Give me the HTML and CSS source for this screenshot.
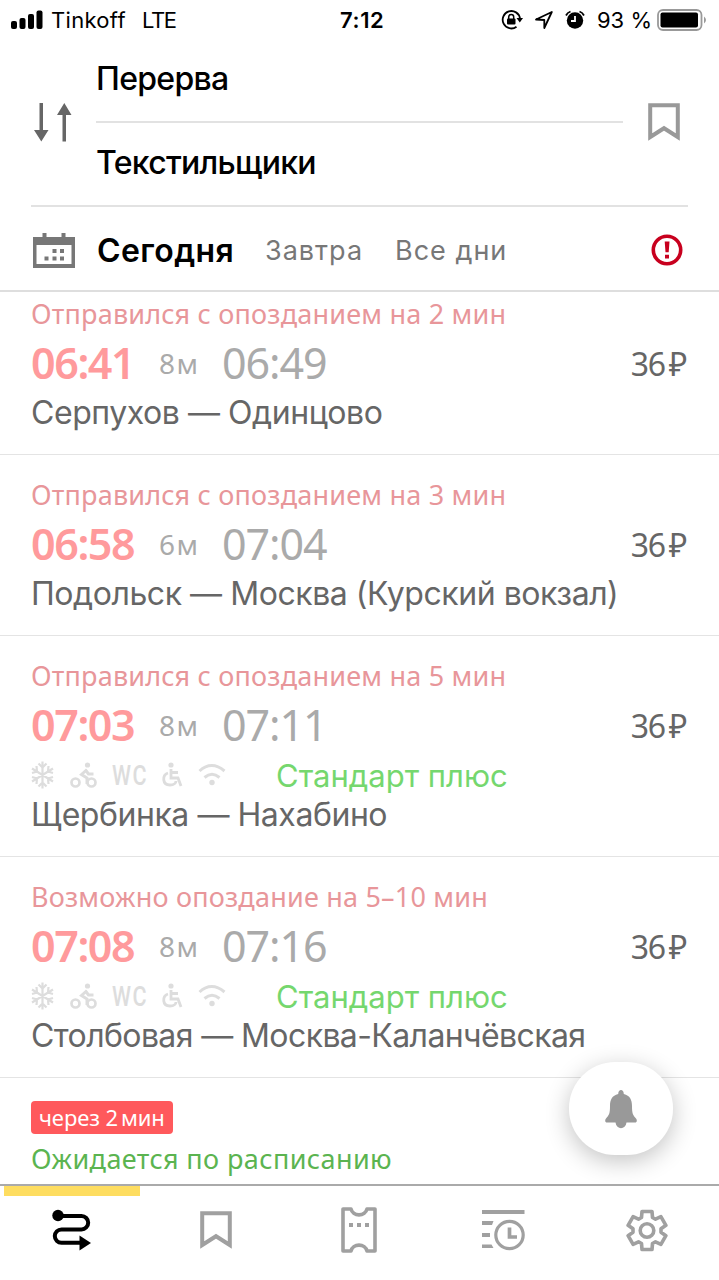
FILE: index.html
```html
<!DOCTYPE html>
<html lang="ru">
<head>
  <meta charset="UTF-8" />
  <meta name="viewport" content="width=device-width, initial-scale=1" />
  <title>Расписание электричек</title>
  <link rel="stylesheet" href="styles.css">
</head>
<body>
  <!-- icons used more than once -->
  <svg class="sprite">
    <symbol id="bookmark" viewBox="0 0 32 38">
      <path d="M2.2 2.2h27.6v31.8L16 25.2 2.2 34z" fill="none" stroke="currentColor" stroke-width="4" />
    </symbol>
    <symbol id="amenities" viewBox="0 0 200 32">
      <g fill="none" stroke="currentColor" stroke-width="2.7">
        <path d="M11.500 2.500v27M1 9.500l21 13M1 22.500l21-13M7.500 4.500l4 4 4-4M7.500 27.500l4-4 4 4M1 14l5-1.500-.5-5.500M22 14l-5-1.500.5-5.500M1 18l5 1.500-.5 5.500M22 18l-5 1.500.5 5.500" stroke-width="2.200" />
        <circle cx="44.500" cy="23.500" r="4" />
        <circle cx="60.500" cy="23.500" r="4" />
        <path d="M56 10.500l-5.500 5 5.500 3.500v6M54.500 11l3 4h5" stroke-width="3" />
        <path d="M140 10v9h7l3 8M141 13.500h6M137 14c-6 2-6 12 2 12 4 0 6-2 6-4" stroke-width="2.800" />
        <path d="M168.500 12q12-11 25 0M173.500 18.500q7.500-6.500 15 0" stroke-width="3" />
      </g>
      <g fill="currentColor">
        <circle cx="56.500" cy="6" r="2.600" />
        <circle cx="140" cy="6" r="2.600" />
        <circle cx="181" cy="23.500" r="2.700" />
      </g>
    </symbol>
  </svg>

  <div class="status">
    <svg class="signal" width="32" height="20" viewBox="0 0 32 20">
      <rect x="0" y="11" width="6" height="8" rx="2" />
      <rect x="8.500" y="8" width="6" height="11" rx="2" />
      <rect x="17" y="4" width="6" height="15" rx="2" />
      <rect x="25.500" y="0.500" width="6" height="18.500" rx="2" />
    </svg>
    <span class="carrier">Tinkoff</span>
    <span class="network">LTE</span>
    <span class="clock">7:12</span>
    <div class="status-right">
      <svg width="22" height="20" viewBox="0 0 22 20">
        <path d="M15.500 16.800a8.700 8.700 0 1 1 3.500-8.300" fill="none" stroke="#000" stroke-width="1.800" />
        <path d="M15.500 8h6.500l-3.200 4.500z" />
        <rect x="6" y="8.500" width="8.500" height="6" rx="1" />
        <path d="M7.700 9V7a2.500 2.500 0 0 1 5 0v2" fill="none" stroke="#000" stroke-width="1.500" />
      </svg>
      <svg width="18" height="20" viewBox="0 0 18 20">
        <path d="M1 9.500L16.800 2 9.300 18V10z" fill="none" stroke="#000" stroke-width="1.800" stroke-linejoin="round" />
      </svg>
      <svg width="20" height="20" viewBox="0 0 20 20">
        <circle cx="10" cy="10.500" r="8.200" />
        <path d="M1 5.500a8 8 0 0 1 4.500-4M19 5.500a8 8 0 0 0-4.500-4" fill="none" stroke="#000" stroke-width="1.800" />
        <path d="M10 6v5H6" fill="none" stroke="#fff" stroke-width="1.800" />
      </svg>
      <span class="charge">93 %</span>
      <svg width="51" height="22" viewBox="0 0 51 22">
        <rect x="1" y="1" width="43.500" height="20" rx="5" fill="#fff" stroke="#999" stroke-width="1.800" />
        <rect x="3.500" y="3.500" width="37.500" height="15" rx="2" />
        <path d="M47 7.500q4 3.500 0 7z" fill="#999" />
      </svg>
    </div>
  </div>

  <div class="route">
    <svg class="swap" width="38" height="39" viewBox="0 0 38 39">
      <path d="M5.500 0H9v27h5.500L7.300 38.500 0 27h5.500zM28.500 38.500H32V12h5.500L30.300 0 23 12h5.500z" />
    </svg>
    <div class="stations">
      <div class="station from">Перерва</div>
      <div class="station to">Текстильщики</div>
    </div>
    <svg class="save" width="32" height="38"><use href="#bookmark" /></svg>
  </div>

  <div class="days">
    <svg class="calendar" width="42" height="36" viewBox="0 0 42 36">
      <path d="M9.500 0h4v4H28.500V0h4v4H42v31H0V4h9.500zM3.500 12v19h35V12z" fill-rule="evenodd" />
      <path d="M19.500 16h4v4h-4zM27 16h4v4h-4zM11.500 23.500h4v4h-4zM19.500 23.500h4v4h-4zM27 23.500h4v4h-4z" />
    </svg>
    <span class="day active">Сегодня</span>
    <span class="day tomorrow">Завтра</span>
    <span class="day all">Все дни</span>
    <svg class="alert" width="32" height="32" viewBox="0 0 32 32">
      <circle cx="16" cy="16" r="13.700" fill="none" stroke="#c8001e" stroke-width="3.600" />
      <path d="M13.700 7.500h4.800l-.8 10.800h-3.200zM14 20.800h4v3.600h-4z" fill="#c8001e" />
    </svg>
  </div>

  <div class="trains">
    <div class="train first">
      <div class="delay">Отправился с опозданием на 2 мин</div>
      <div class="times">
        <span class="start">06:41</span>
        <span class="duration">8м</span>
        <span class="end">06:49</span>
        <span class="price">36<span class="rub">₽</span></span>
      </div>
      <div class="direction">Серпухов — Одинцово</div>
    </div>

    <div class="train">
      <div class="delay">Отправился с опозданием на 3 мин</div>
      <div class="times">
        <span class="start">06:58</span>
        <span class="duration">6м</span>
        <span class="end">07:04</span>
        <span class="price">36<span class="rub">₽</span></span>
      </div>
      <div class="direction">Подольск — Москва (Курский вокзал)</div>
    </div>

    <div class="train express">
      <div class="delay">Отправился с опозданием на 5 мин</div>
      <div class="times">
        <span class="start">07:03</span>
        <span class="duration">8м</span>
        <span class="end">07:11</span>
        <span class="price">36<span class="rub">₽</span></span>
      </div>
      <div class="extras">
        <div class="amenities">
          <svg width="200" height="32"><use href="#amenities" /></svg>
          <span class="wc">WC</span>
        </div>
        <span class="class-name">Стандарт плюс</span>
      </div>
      <div class="direction">Щербинка — Нахабино</div>
    </div>

    <div class="train express">
      <div class="delay">Возможно опоздание на 5–10 мин</div>
      <div class="times">
        <span class="start">07:08</span>
        <span class="duration">8м</span>
        <span class="end">07:16</span>
        <span class="price">36<span class="rub">₽</span></span>
      </div>
      <div class="extras">
        <div class="amenities">
          <svg width="200" height="32"><use href="#amenities" /></svg>
          <span class="wc">WC</span>
        </div>
        <span class="class-name">Стандарт плюс</span>
      </div>
      <div class="direction long">Столбовая — Москва-Каланчёвская</div>
    </div>

    <div class="train next">
      <div class="soon">через 2<span class="unit">мин</span></div>
      <div class="on-time">Ожидается по расписанию</div>
    </div>

    <div class="bell">
      <svg width="34" height="40" viewBox="0 0 34 40">
        <path d="M17 1c1.500 0 2.600 1 2.800 4C26 6.500 28 11 28 17c0 8 1 9 4 12.500 1.500 2 .8 4-1 4h-8.500c-1 7.500-10 7.500-11 0H3c-1.800 0-2.500-2-1-4C5 26 6 25 6 17 6 11 8 6.500 14.200 5 14.400 2 15.500 1 17 1z" />
      </svg>
    </div>
  </div>

  <div class="tabs">
    <div class="tab current">
      <svg width="40" height="42" viewBox="0 0 40 42">
        <g fill="none" stroke="#000" stroke-width="4">
          <path d="M6 7h23.500a6.700 6.700 0 0 1 0 13.400H9.500a6.700 6.700 0 0 0 0 13.400H29" />
        </g>
        <circle cx="6" cy="6.500" r="5.700" />
        <path d="M27.500 26.500v15L39 34z" />
      </svg>
    </div>
    <div class="tab">
      <svg width="32" height="38"><use href="#bookmark" /></svg>
    </div>
    <div class="tab">
      <svg width="36" height="46" viewBox="0 0 36 46">
        <path d="M2 2h8a8.200 7.500 0 0 0 16 0h8v42h-8a8.200 7.500 0 0 0-16 0H2z" fill="none" stroke="currentColor" stroke-width="3.600" stroke-linejoin="round" />
        <path d="M8 16h4v4H8zM16 16h4v4h-4zM24 16h4v4h-4z" fill="currentColor" />
      </svg>
    </div>
    <div class="tab">
      <svg width="43" height="42" viewBox="0 0 43 42">
        <path d="M0 1h42.500v4H0zM0 12h11.500L10 16H0zM0 24h8v4H0zM0 35.500h9.500l2 3.500H0z" fill="currentColor" />
        <circle cx="27.500" cy="26" r="13.700" fill="none" stroke="currentColor" stroke-width="3.200" />
        <path d="M27.500 18.500v9.500h7.500" fill="none" stroke="currentColor" stroke-width="3.700" />
      </svg>
    </div>
    <div class="tab">
      <svg width="42" height="43" viewBox="-21 -21.500 42 43">
        <g fill="none" stroke="currentColor" stroke-width="3.600" stroke-linejoin="round">
          <path d="M-5.500-13L-5-19H5l.5 6 3 1.700 5.400-2.500 5 8.600-4.900 3.500v3.400l4.900 3.500-5 8.600-5.400-2.500-3 1.700L5 19H-5l-.5-6-3-1.700-5.400 2.500-5-8.600 4.900-3.500v-3.400l-4.900-3.500 5-8.600 5.400 2.500z" />
          <circle cx="0" cy="0" r="6.800" />
        </g>
      </svg>
    </div>
  </div>
</body>
</html>
```
FILE: styles.css
```css
* {
  box-sizing: border-box;
}

body {
  margin: 0;
  height: 1280px;
  overflow: hidden;
  display: flex;
  flex-direction: column;
  background: #fff;
  color: #000;
  font-family: Inter, "Liberation Sans", sans-serif;
  white-space: nowrap;
}

svg {
  display: block;
  flex: none;
}

.sprite {
  position: absolute;
  width: 0;
  height: 0;
}

.status {
  display: grid;
  grid-template-columns: 32px 92px 196px 1fr auto;
  align-items: center;
  height: 40px;
  padding: 0 11px;
  font-size: 22px;
}

.carrier {
  padding-left: 8px;
  letter-spacing: 0.3px;
}

.network {
  padding-left: 7px;
  letter-spacing: -1.4px;
}

.clock {
  padding-left: 9px;
  font-weight: 600;
  letter-spacing: 0.6px;
}

.status-right {
  display: flex;
  align-items: center;
  gap: 12px;
}

.charge {
  margin-right: -7px;
}

.route {
  display: flex;
  align-items: center;
  height: 167px;
  margin: 0 31px;
  padding-left: 3px;
  border-bottom: 2px solid #e2e2e2;
}

.swap {
  fill: #666;
}

.stations {
  width: 527px;
  margin-left: 24px;
}

.station {
  height: 84px;
  font-size: 32px;
  font-weight: 500;
  letter-spacing: -0.7px;
  line-height: 79px;
}

.from {
  border-bottom: 2px solid #e2e2e2;
}

.save {
  margin: -2px 0 0 25px;
  color: #999;
}

.days {
  display: flex;
  align-items: center;
  height: 85px;
  padding: 4px 36px 0 33px;
  border-bottom: 2px solid #dedede;
  color: #777;
  font-size: 27px;
  letter-spacing: 1px;
}

.calendar {
  fill: #777;
}

.active {
  width: 168px;
  margin-left: 22px;
  color: #000;
  font-size: 32px;
  font-weight: 570;
  letter-spacing: 0.4px;
}

.tomorrow {
  width: 130px;
}

.alert {
  margin: -2px 0 0 auto;
}

.trains {
  position: relative;
  flex: 1;
  overflow: hidden;
  font-family: "Noto Sans", sans-serif;
}

.train {
  height: 181px;
  padding: 21px 31px 0;
  border-bottom: 1px solid #e4e4e4;
}

.first {
  height: 163px;
  padding-top: 3px;
}

.express {
  height: 221px;
}

.delay {
  height: 38px;
  color: #e8969a;
  font-size: 27px;
  letter-spacing: 0.2px;
  line-height: 37px;
}

.times {
  display: grid;
  grid-template-columns: 128px 63px 1fr auto;
  align-items: center;
  height: 61px;
  padding-bottom: 3px;
  color: #aaa;
  font-size: 43px;
  letter-spacing: -1.1px;
}

.start {
  color: #ff9a9c;
  font-weight: 600;
  letter-spacing: -1.4px;
}

.duration {
  font-size: 28px;
  letter-spacing: 1.5px;
}

.price {
  padding: 2px 2px 0 0;
  color: #666;
  font-size: 32px;
  letter-spacing: -1.3px;
}

.rub {
  margin-left: 4px;
}

.direction {
  height: 38px;
  color: #666;
  font-family: Inter, sans-serif;
  font-size: 32px;
  letter-spacing: -0.45px;
  line-height: 38px;
}

.long {
  letter-spacing: -0.6px;
}

.extras {
  display: flex;
  align-items: center;
  height: 40px;
  padding-bottom: 2px;
  font-family: Inter, sans-serif;
}

.amenities {
  position: relative;
  width: 245px;
  color: #ddd;
}

.wc {
  position: absolute;
  left: 81px;
  top: 1px;
  font-family: Roboto, sans-serif;
  font-size: 28px;
  font-weight: 500;
  letter-spacing: 2px;
  line-height: 32px;
  transform: scaleX(0.77);
  transform-origin: left;
}

.class-name {
  color: #75d76e;
  font-size: 31px;
}

.soon {
  width: 142px;
  height: 33px;
  margin-top: 2px;
  padding-left: 8px;
  border-radius: 4px;
  background: #ff595c;
  color: #fff;
  font-size: 22px;
  letter-spacing: -0.1px;
  line-height: 33px;
}

.unit {
  margin-left: 3px;
}

.on-time {
  color: #5bb450;
  font-size: 27px;
  letter-spacing: 0.4px;
  line-height: 50px;
}

.bell {
  position: absolute;
  right: 46px;
  bottom: 29px;
  width: 104px;
  height: 93px;
  display: flex;
  align-items: center;
  justify-content: center;
  border-radius: 46px;
  background: #fff;
  box-shadow: 0 6px 24px rgba(0, 0, 0, 0.24);
  fill: #999;
}

.tabs {
  display: grid;
  grid-template-columns: repeat(5, 1fr);
  height: 96px;
  border-top: 2px solid #aaa;
  color: #a0a0a0;
}

.tab {
  display: flex;
  align-items: center;
  justify-content: center;
  padding-bottom: 6px;
}

.current {
  position: relative;
}

.current::before {
  content: "";
  position: absolute;
  left: 4px;
  top: 0;
  width: 136px;
  height: 10px;
  background: #fedd60;
}
```
